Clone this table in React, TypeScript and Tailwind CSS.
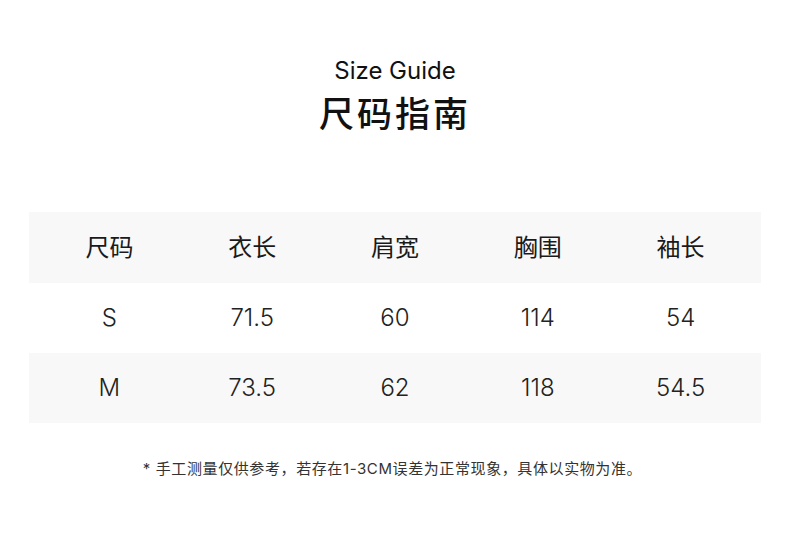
const headers = ["尺码", "衣长", "肩宽", "胸围", "袖长"];

const rows = [
  { bg: "bg-white", cells: ["S", "71.5", "60", "114", "54"] },
  { bg: "bg-[#f8f8f8]", cells: ["M", "73.5", "62", "118", "54.5"] },
];

const cjk = "font-['Inter','Noto_Sans_CJK_SC',sans-serif]";

function App() {
  return (
    <div className={`w-[790px] h-[539px] bg-white text-[#1a1a1a] ${cjk}`}>
      <div className="flex flex-col items-center pt-[54px]">
        <h2 className="text-[24px] leading-[34px] text-[#111]">Size Guide</h2>
        <h1 className="mt-[3px] text-[35px] leading-[46px] font-medium tracking-[3px] text-[#111]">尺码指南</h1>
      </div>

      <div className="mx-[29px] mt-[75px] px-[9px] bg-[#f8f8f8]">
        <div className="grid grid-cols-5 h-[71px] items-center text-center text-[24px] text-[#1a1a1a]">
          {headers.map((h) => (
            <div key={h}>{h}</div>
          ))}
        </div>
      </div>
      <div className="mx-[29px]">
        {rows.map((r) => (
          <div key={r.cells[0]} className={`grid grid-cols-5 px-[9px] h-[70px] items-center text-center text-[24px] font-light text-[#222] ${r.bg}`}>
            {r.cells.map((c, i) => (
              <div key={i}>{c}</div>
            ))}
          </div>
        ))}
      </div>

      <p className="mt-[35px] text-center text-[15px] leading-[22px] tracking-[0.6px] text-[#333] pr-[5px]">
        * 手工测量仅供参考，若存在1-3CM误差为正常现象，具体以实物为准。
      </p>
    </div>
  );
}

export default App;
